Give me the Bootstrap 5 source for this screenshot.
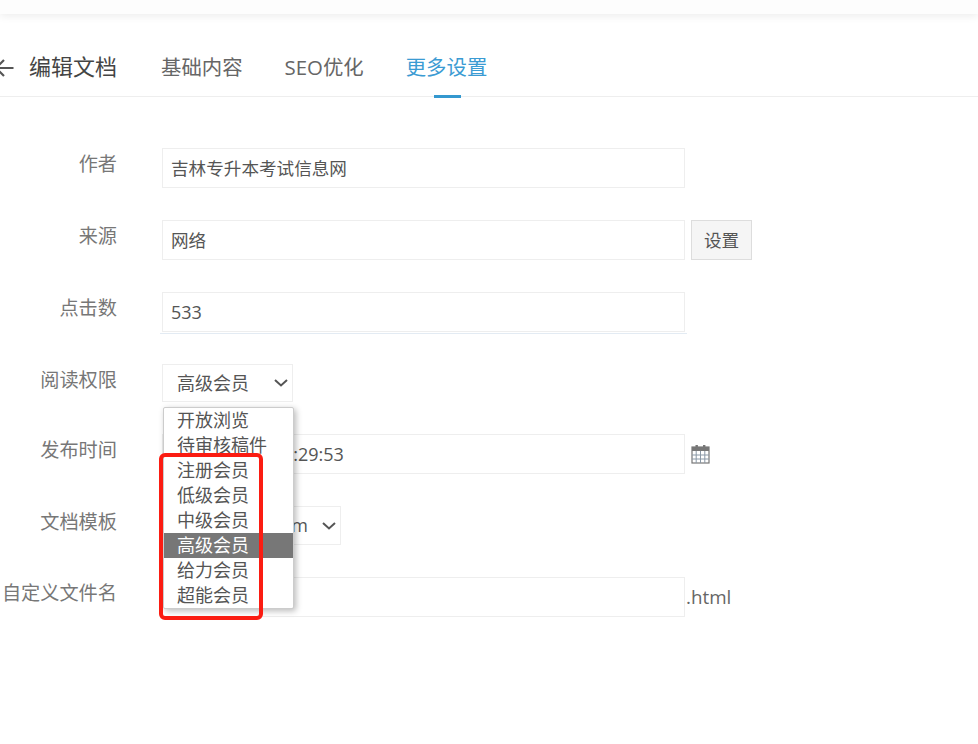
<!DOCTYPE html>
<html lang="zh-CN">
<head>
<meta charset="utf-8">
<title>编辑文档</title>
<link rel="stylesheet" href="https://cdn.jsdelivr.net/npm/bootstrap@5.3.0/dist/css/bootstrap.min.css">
<style>
html,body{height:100%;overflow:hidden}
body{background:#fff;font-family:"Open Sans","Noto Sans CJK SC",sans-serif;color:#555;font-size:17.6px}
.topstrip{height:14px;background:#fdfdfd;box-shadow:0 2px 8px rgba(0,0,0,.08)}
.headbar{height:83px;border-bottom:1px solid #eee}
.backicon{width:14px;height:14px;margin:25px 15px 0 0;flex:none;overflow:visible}
.pagetitle{font-size:22px;font-weight:400;color:#444;width:132px;margin:23px 0 0;line-height:1;padding-bottom:1px}
.tablist{gap:42px}
.tablist .nav-link{padding:0;height:83px;line-height:106px;font-size:20.4px;color:#666;position:relative}
.tablist .nav-link.active{color:#3b9bd3}
.tablist .nav-link.active::after{content:"";position:absolute;left:28px;width:27px;bottom:-1px;height:3px;background:#3498cf}
.formwrap{padding-top:51px;gap:32px}
.lbl{width:117px;flex:none;text-align:right;font-size:19.2px;color:#777;line-height:32px;white-space:nowrap;margin:0 45px 0 0;padding:0}
.txtin.form-control{width:523px;height:40px;flex:none;border:1px solid #eee;border-radius:0;padding:2px 8px 4px;font-size:17.6px;color:#555;box-shadow:none}
.numin.form-control{font-size:18px;padding:4px 8px}
.datein.form-control{font-size:18px;padding:4px 8px 4px 11px}
.extrawrap{position:relative}
.extrawrap::after{content:"";position:absolute;left:-2px;right:-2px;top:41px;height:1px;background:#e3ebf3}
.sel.form-select{border:1px solid #eee;border-radius:0;padding:0 0 0 14px;font-size:18px;color:#555;box-shadow:none;background-image:url("data:image/svg+xml,%3csvg xmlns='http://www.w3.org/2000/svg' viewBox='0 0 14 8'%3e%3cpath fill='none' stroke='%23555' stroke-width='2' d='M1 1l6 5.5L13 1'/%3e%3c/svg%3e");background-position:right 4px center;background-size:14px 8px}
.sel-a.form-select{width:131px;height:38px}
.sel-b.form-select{width:179px;height:39px;padding-left:14px}
.setbtn.btn{width:61px;height:40px;margin-left:6px;background:#f5f5f5;border:1px solid #ddd;border-radius:0;color:#555;font-size:17.6px;padding:0}
.calicon{width:19px;height:20px;margin-left:6px}
.suffix{margin-left:1px;font-size:18.8px;color:#666}
.selholder{position:relative}
.optmenu.dropdown-menu{top:43px;left:1px;width:131px;min-width:0;padding:0;border:1px solid #ccc;border-radius:2px;box-shadow:2px 2px 6px rgba(0,0,0,.28);font-size:18px;height:202px;overflow:hidden;z-index:5}
.optmenu .dropdown-item{height:25px;line-height:25px;padding:0 0 0 13px;color:#555}
.optmenu .dropdown-item.active{background:#777;color:#fff}
.redmark{position:absolute;left:159px;top:453px;width:104px;height:167px;border:4px solid #fb1c12;border-radius:6px;z-index:6}
</style>
</head>
<body>
<div class="topstrip"></div>
<header class="headbar d-flex align-items-center">
  <svg class="backicon" viewBox="0 0 14 14" aria-hidden="true"><path d="M13.5 7H-2M4 -1-4 7l8 8" fill="none" stroke="#555" stroke-width="2.2"/></svg>
  <h1 class="pagetitle">编辑文档</h1>
  <ul class="nav tablist">
    <li class="nav-item"><a class="nav-link" href="#">基础内容</a></li>
    <li class="nav-item"><a class="nav-link" href="#">SEO优化</a></li>
    <li class="nav-item"><a class="nav-link active" href="#">更多设置</a></li>
  </ul>
</header>
<form class="formwrap d-flex flex-column">
  <div class="d-flex align-items-start"><label class="lbl">作者</label><input class="form-control txtin" value="吉林专升本考试信息网"></div>
  <div class="d-flex align-items-start"><label class="lbl">来源</label><input class="form-control txtin" value="网络"><button type="button" class="btn setbtn">设置</button></div>
  <div class="d-flex align-items-start"><label class="lbl">点击数</label><div class="extrawrap"><input class="form-control txtin numin" value="533"></div></div>
  <div class="d-flex align-items-start"><label class="lbl">阅读权限</label>
    <div class="selholder">
      <select class="form-select sel sel-a"><option>高级会员</option></select>
      <div class="dropdown-menu show optmenu">
        <a class="dropdown-item" href="#">开放浏览</a>
        <a class="dropdown-item" href="#">待审核稿件</a>
        <a class="dropdown-item" href="#">注册会员</a>
        <a class="dropdown-item" href="#">低级会员</a>
        <a class="dropdown-item" href="#">中级会员</a>
        <a class="dropdown-item active" href="#">高级会员</a>
        <a class="dropdown-item" href="#">给力会员</a>
        <a class="dropdown-item" href="#">超能会员</a>
      </div>
    </div>
  </div>
  <div class="d-flex align-items-center"><label class="lbl align-self-start">发布时间</label><input class="form-control txtin datein" value="2021-03-26 15:29:53">
    <svg class="calicon" viewBox="0 0 19 20" aria-hidden="true"><rect x="1" y="3" width="17" height="16" fill="none" stroke="#777" stroke-width="1.2"/><rect x="1" y="3" width="17" height="4" fill="#777"/><rect x="4.5" y="1" width="2.4" height="5" fill="#777"/><rect x="12" y="1" width="2.4" height="5" fill="#777"/><path d="M1 11h17M1 15h17M5.2 7v12M9.5 7v12M13.8 7v12" stroke="#8a98a6" stroke-width="1" fill="none"/></svg>
  </div>
  <div class="d-flex align-items-start"><label class="lbl">文档模板</label><select class="form-select sel sel-b"><option>article_info.htm</option></select></div>
  <div class="d-flex align-items-center"><label class="lbl align-self-start">自定义文件名</label><input class="form-control txtin" value=""><span class="suffix">.html</span></div>
</form>
<div class="redmark"></div>
</body>
</html>
